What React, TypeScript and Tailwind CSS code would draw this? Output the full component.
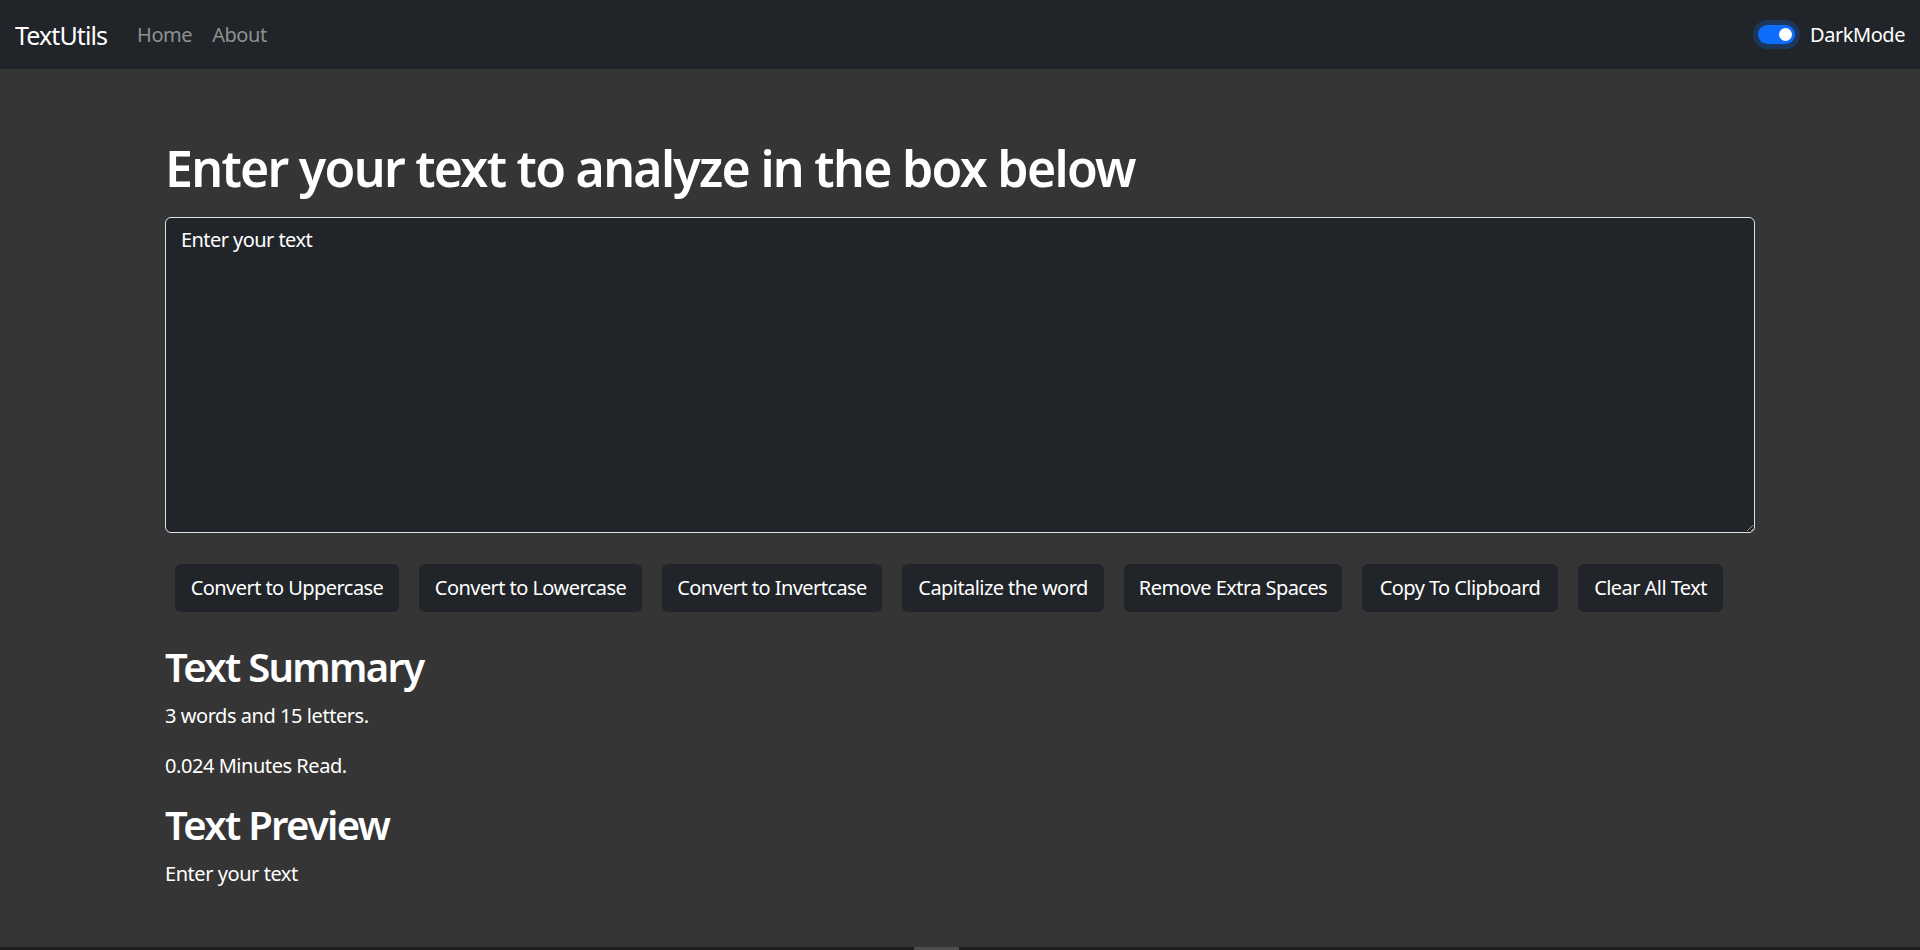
import React from "react";

const FONT = '"Noto Sans", "Open Sans", sans-serif';

const buttons: { label: string; w: string }[] = [
  { label: "Convert to Uppercase", w: "w-[224px]" },
  { label: "Convert to Lowercase", w: "w-[223px]" },
  { label: "Convert to Invertcase", w: "w-[220px]" },
  { label: "Capitalize the word", w: "w-[202px]" },
  { label: "Remove Extra Spaces", w: "w-[218px]" },
  { label: "Copy To Clipboard", w: "w-[196px]" },
  { label: "Clear All Text", w: "w-[145px]" },
];

export default function App() {
  return (
    <div
      className="min-h-[950px] bg-[#353535] text-white tracking-[-0.028em]"
      style={{ fontFamily: FONT }}
    >
      <nav className="h-[69px] bg-[#212529] flex items-center pl-[15px] pr-[15px]">
        <span className="text-[25px] leading-[30px] text-white mr-[20px] tracking-[-0.036em]">TextUtils</span>
        <a className="text-[20px] leading-[30px] text-[#8e9194] px-[10px]">Home</a>
        <a className="text-[20px] leading-[30px] text-[#8e9194] px-[10px]">About</a>
        <div className="ml-auto flex items-center">
          <div className="relative w-[37px] h-[19px] rounded-full bg-[#0d6efd] shadow-[0_0_0_5px_rgba(13,110,253,0.25)] mr-[15px]">
            <span className="absolute right-[3px] top-[3px] w-[13px] h-[13px] rounded-full bg-white" />
          </div>
          <span className="text-[20px] leading-[30px] text-white">DarkMode</span>
        </div>
      </nav>

      <main className="w-[1590px] mx-auto">
        <h1 className="mt-[69px] text-[50px] leading-[60px] font-semibold mb-[19px] tracking-[-0.034em]">
          Enter your text to analyze in the box below
        </h1>
        <textarea
          readOnly
          defaultValue="Enter your text"
          className="block w-[1590px] h-[316px] bg-[#212529] text-white text-[20px] leading-[30px] border border-[#dee2e6] rounded-[6px] px-[15px] py-[7px] outline-none tracking-[-0.028em]"
          style={{ fontFamily: FONT }}
        />
        <div className="flex gap-[20px] pl-[10px] mt-[31px]">
          {buttons.map((b) => (
            <button
              key={b.label}
              className={`${b.w} h-[48px] bg-[#212529] rounded-[6px] text-[20px] leading-[30px] text-white flex items-center justify-center whitespace-nowrap tracking-[-0.028em]`}
            >
              {b.label}
            </button>
          ))}
        </div>
        <h2 className="mt-[31px] text-[40px] leading-[48px] font-semibold tracking-[-0.042em]">Text Summary</h2>
        <p className="mt-[9.5px] text-[20px] leading-[30px]">3 words and 15 letters.</p>
        <p className="mt-[20px] text-[20px] leading-[30px]">0.024 Minutes Read.</p>
        <h2 className="mt-[20.5px] text-[40px] leading-[48px] font-semibold tracking-[-0.042em]">Text Preview</h2>
        <p className="mt-[9.5px] text-[20px] leading-[30px]">Enter your text</p>
      </main>

      <div className="fixed left-0 right-0 bottom-0 h-[3px] bg-[#1e1e1e]">
        <div className="absolute left-[914px] w-[45px] top-0 h-[3px] bg-[#4d4d4d]" />
      </div>
    </div>
  );
}
